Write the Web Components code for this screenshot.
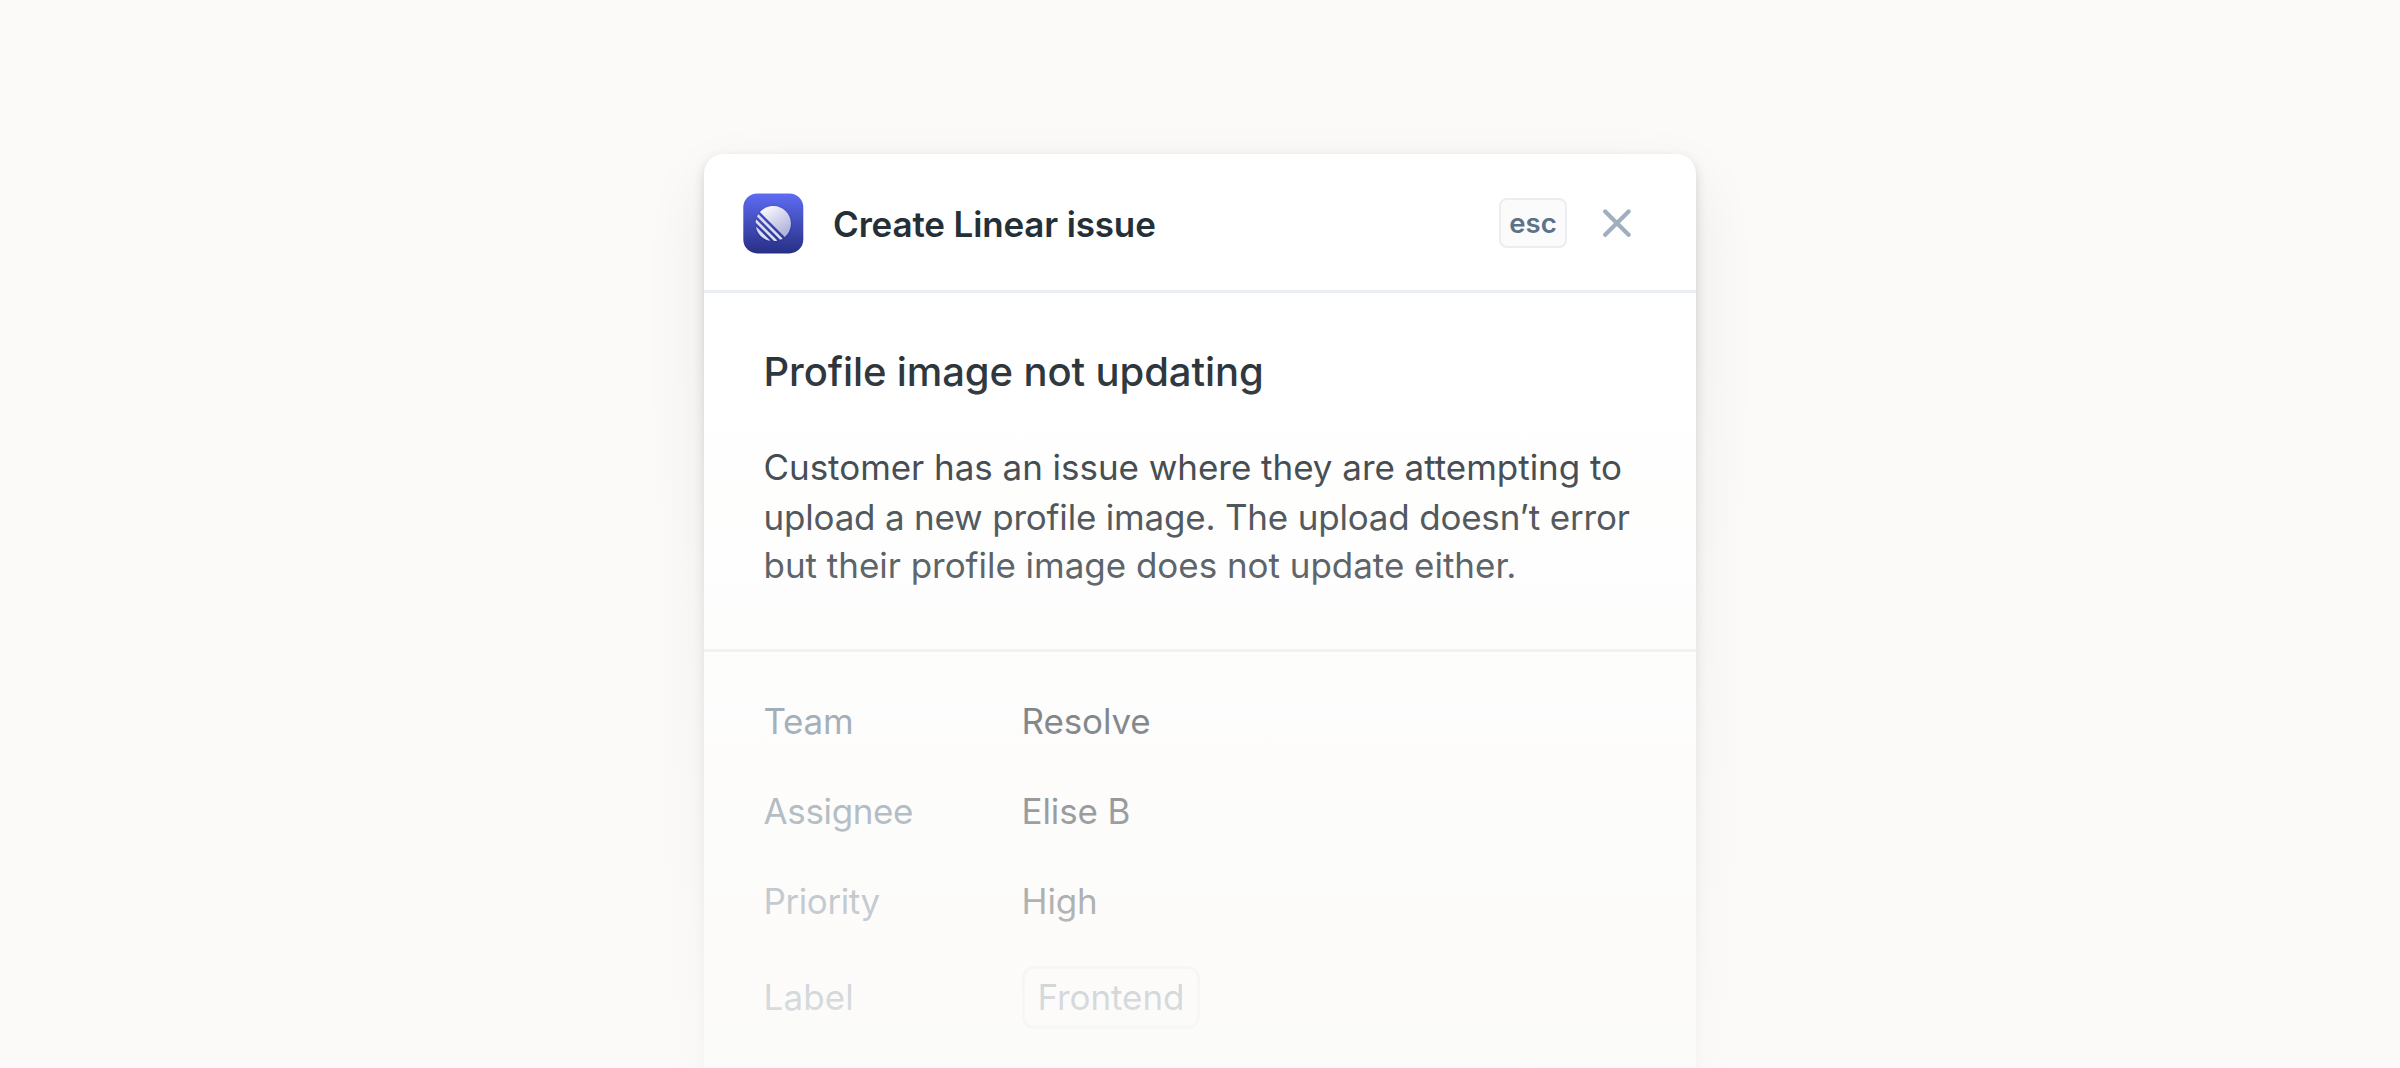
<!DOCTYPE html>
<html lang="en">
<head>
<meta charset="utf-8">
<title>Create Linear issue</title>
<style>
  html, body { margin: 0; height: 100%; overflow: hidden; background: #fbfaf8; }
  body { font-family: Inter, "Liberation Sans", sans-serif; }
  .l1 { letter-spacing: -.04px; }
  .l2 { letter-spacing: -.2px; }
  .l3 { letter-spacing: -.03px; }
</style>
</head>
<body>
<issue-stage>
  <issue-dialog>
    <dialog-header slot="header" shortcut="esc">Create Linear issue</dialog-header>
    <issue-summary slot="summary">
      <span slot="title">Profile image not updating</span>
      <span class="l1">Customer has an issue where they are attempting to</span>
      <span class="l2">upload a new profile image. The upload doesn’t error</span>
      <span class="l3">but their profile image does not update either.</span>
    </issue-summary>
    <issue-field label="Team">Resolve</issue-field>
    <issue-field label="Assignee" style="--label-tracking:-.36px">Elise B</issue-field>
    <issue-field label="Priority" style="--label-tracking:-.4px">High</issue-field>
    <issue-field label="Label" style="--label-tracking:.1px"><label-chip>Frontend</label-chip></issue-field>
  </issue-dialog>
</issue-stage>
<script>
const define = (name, html, setup) => customElements.define(name, class extends HTMLElement {
  constructor() {
    super();
    this.attachShadow({ mode: 'open' }).innerHTML = html;
  }
  connectedCallback() { if (setup) setup(this, this.shadowRoot); }
});

define('linear-logo', `
  <style>
    :host { display: block; width: 60px; height: 60px; }
    svg { display: block; overflow: visible; }
  </style>
  <svg width="60" height="60" viewBox="0 0 60 60">
    <defs>
      <linearGradient id="tile" x1="0" y1="0" x2="0" y2="1">
        <stop offset="0" stop-color="#5e6cf3"/><stop offset="1" stop-color="#272f84"/>
      </linearGradient>
      <linearGradient id="disc" x1=".25" y1=".1" x2=".8" y2=".85">
        <stop offset="0" stop-color="#f3f3fa"/><stop offset="1" stop-color="#b3b6dc"/>
      </linearGradient>
      <filter id="glow" x="-40%" y="-40%" width="180%" height="180%">
        <feDropShadow dx="0" dy="1" stdDeviation="2.5" flood-color="#1c2270" flood-opacity=".35"/>
      </filter>
    </defs>
    <rect x=".3" y=".4" width="60" height="60" rx="14" fill="url(#tile)"/>
    <g transform="translate(12.7 12.9) scale(.352)" fill="url(#disc)" filter="url(#glow)">
      <path fill="#dcdef0" d="M1.22541 61.5228c-.2225-.9485.90748-1.5459 1.59638-.857L39.3342 97.1782c.6889.6889.0915 1.8189-.857 1.5964C20.0515 94.4522 5.54779 79.9485 1.22541 61.5228Z"/>
      <path fill="#dcdef0" d="M.00189 46.8891c-.01764.2833.08887.5599.28957.7606L52.3503 99.7085c.2007.2007.4773.3075.7606.2896 2.3692-.1476 4.6938-.46 6.9624-.9259.7645-.157 1.0301-1.0963.4782-1.6481L2.57595 39.4485c-.55186-.5519-1.49117-.2863-1.64817.4782-.46592 2.2686-.77832 4.5932-.92589 6.9624Z"/>
      <path fill="#dcdef0" d="M4.21093 29.7054c-.16649.3738-.08169.8106.20765 1.1l64.77602 64.776c.2894.2894.7262.3742 1.1.2077 1.7861-.7956 3.5171-1.6927 5.1855-2.684.5521-.328.6373-1.0867.1832-1.5407L8.43566 24.3367c-.45409-.4541-1.21271-.3689-1.54074.1832-.99132 1.6684-1.88843 3.3994-2.68399 5.1855Z"/>
      <path d="M12.6587 18.074c-.3701-.3701-.393-.9637-.0443-1.3541C21.7795 6.45931 35.1114 0 49.9519 0 77.5927 0 100 22.4073 100 50.0481c0 14.8405-6.4593 28.1724-16.7199 37.3375-.3903.3487-.984.3258-1.3542-.0443L12.6587 18.074Z"/>
    </g>
  </svg>`);

define('key-cap', `
  <style>
    :host { box-sizing: border-box; display: flex; align-items: center; justify-content: center;
      width: 68px; height: 50px; padding-top: 2px; border: 2.5px solid #e9eef1; border-radius: 8px;
      background: #fbfbfb; color: #5c7286; font-size: 27.5px; font-weight: 600; line-height: 1; }
  </style>
  <slot></slot>`);

define('close-button', `
  <style>
    :host { display: block; width: 28px; height: 28px; }
    svg { display: block; }
  </style>
  <svg width="28" height="28" viewBox="0 0 28 28" fill="none" stroke="#9fafbd" stroke-width="4.2" stroke-linecap="round">
    <path d="M2.2 2.4 25.6 25.8M25.6 2.4 2.2 25.8"/>
  </svg>`);

define('dialog-header', `
  <style>
    :host { box-sizing: border-box; display: flex; align-items: center; height: 138px;
      padding: 0 65.5px 0 39px; }
    h1 { flex: 1; margin: 0 0 0 30px; padding-top: 2px; font-size: 35px; font-weight: 600; line-height: 50px;
      letter-spacing: -.15px; color: #252f38; }
    close-button { margin-left: 35.5px; }
  </style>
  <linear-logo></linear-logo>
  <h1><slot></slot></h1>
  <key-cap></key-cap>
  <close-button></close-button>`,
  (host, root) => { root.querySelector('key-cap').textContent = host.getAttribute('shortcut'); });

define('issue-summary', `
  <style>
    :host { display: block; padding: 54px 60px 59px 59.5px; color: #262f36; }
    h2 { margin: 0 0 46px; font-size: 40px; font-weight: 500; line-height: 50px; letter-spacing: -.1px; }
    p { display: grid; grid-template-rows: 50px 48px 49px; margin: 0; font-size: 35px; line-height: 49px; white-space: nowrap; }
  </style>
  <h2><slot name="title"></slot></h2>
  <p><slot></slot></p>`);

define('issue-field', `
  <style>
    :host { display: flex; align-items: center; font-size: 35px; line-height: 50px; letter-spacing: -.12px; color: #262f36; }
    .label { flex: 0 0 258px; color: #5f7588; letter-spacing: var(--label-tracking, -.25px); }
  </style>
  <span class="label"></span><slot></slot>`,
  (host, root) => { root.querySelector('.label').textContent = host.getAttribute('label'); });

define('label-chip', `
  <style>
    :host { box-sizing: border-box; display: flex; align-items: center; height: 63px; padding: 0 13px 1px;
      border: 3px solid #e6ebef; border-radius: 12px; color: #5f7588; letter-spacing: -.08px; }
  </style>
  <slot></slot>`);

define('issue-dialog', `
  <style>
    :host { display: block; width: 992px; height: 1140px; background: #fff; border-radius: 20px;
      box-shadow: 0 5px 12px rgba(25,30,38,.16), 0 25px 64px rgba(25,30,38,.075); }
    .rule { height: 3px; background: #eaeef2; }
    header { height: 136px; }
    .fields { display: flex; flex-direction: column; gap: 39.75px; padding: 44.4px 60px 44.4px 59.5px; }
  </style>
  <header><slot name="header"></slot></header>
  <div class="rule"></div>
  <slot name="summary"></slot>
  <div class="rule"></div>
  <div class="fields"><slot></slot></div>`);

define('issue-stage', `
  <style>
    :host { box-sizing: border-box; position: relative; display: flex; justify-content: center;
      align-items: flex-start; height: 1068px; padding-top: 154px; overflow: hidden; background: #fbfaf8; }
    .fade { position: absolute; inset: 0; pointer-events: none;
      background: linear-gradient(to bottom, rgba(251,250,248,0) 335px, rgba(251,250,248,.83) 1068px); }
  </style>
  <slot></slot>
  <div class="fade"></div>`);
</script>
</body>
</html>
